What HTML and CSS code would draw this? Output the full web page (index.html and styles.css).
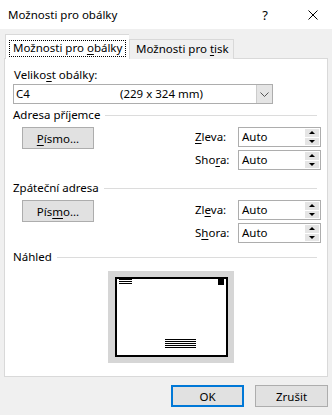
FILE: index.html
```html
<!DOCTYPE html>
<html lang="cs">
<head>
    <meta charset="UTF-8">
    <meta name="viewport" content="width=device-width, initial-scale=1.0">
    <title>Možnosti pro obálky</title>
    <link rel="stylesheet" href="styles.css">
</head>
<body>
    <div class="dialog">
        <div class="titlebar">
            <span class="title">Možnosti pro obálky</span>
            <div class="title-buttons">
                <span class="help">?</span>
                <svg class="close" width="10" height="10" viewBox="0 0 10 10">
                    <path d="M0.5 0.5 L9.5 9.5 M9.5 0.5 L0.5 9.5" stroke="#000" stroke-width="1" fill="none"/>
                </svg>
            </div>
        </div>

        <div class="tabs">
            <div class="tab active"><span class="focus">Možnosti pro <u>o</u>bálky</span></div>
            <div class="tab">Možnosti pro <u>t</u>isk</div>
        </div>

        <div class="panel">
            <div class="field-label">Veliko<u>s</u>t obálky:</div>
            <div class="combo">
                <span class="combo-name">C4</span>
                <span class="combo-size">(229 x 324 mm)</span>
                <span class="combo-arrow">
                    <svg width="9" height="5" viewBox="0 0 9 5">
                        <path d="M0.5 0.5 L4.5 4.5 L8.5 0.5" stroke="#555" stroke-width="1" fill="none"/>
                    </svg>
                </span>
            </div>

            <div class="group-title">Adresa příjemce</div>
            <div class="group-row">
                <button class="btn"><u>P</u>ísmo...</button>
                <div class="offsets">
                    <span class="offset-label"><u>Z</u>leva:</span>
                    <div class="spin"><span>Auto</span><span class="spin-btns"><i class="up"></i><i class="down"></i></span></div>
                    <span class="offset-label">Sho<u>r</u>a:</span>
                    <div class="spin"><span>Auto</span><span class="spin-btns"><i class="up"></i><i class="down"></i></span></div>
                </div>
            </div>

            <div class="group-title second">Zpáteční adresa</div>
            <div class="group-row">
                <button class="btn">Pís<u>m</u>o...</button>
                <div class="offsets">
                    <span class="offset-label">Zl<u>e</u>va:</span>
                    <div class="spin"><span>Auto</span><span class="spin-btns"><i class="up"></i><i class="down"></i></span></div>
                    <span class="offset-label">S<u>h</u>ora:</span>
                    <div class="spin"><span>Auto</span><span class="spin-btns"><i class="up"></i><i class="down"></i></span></div>
                </div>
            </div>

            <div class="group-title third">Náhled</div>
            <svg class="preview" width="126" height="92" viewBox="0 0 126 92">
                <rect x="0" y="0" width="126" height="92" fill="#d6d6d6"/>
                <rect x="8" y="7" width="111" height="78" fill="#fff" stroke="#000" stroke-width="2"/>
                <g stroke="#000" stroke-width="1">
                    <line x1="11" y1="8.5" x2="24" y2="8.5"/>
                    <line x1="11" y1="10.5" x2="24" y2="10.5"/>
                    <line x1="11" y1="12.5" x2="24" y2="12.5"/>
                    <line x1="57" y1="68.5" x2="88" y2="68.5"/>
                    <line x1="57" y1="70.5" x2="88" y2="70.5"/>
                    <line x1="57" y1="72.5" x2="88" y2="72.5"/>
                    <line x1="57" y1="74.5" x2="88" y2="74.5"/>
                    <line x1="57" y1="76.5" x2="88" y2="76.5"/>
                </g>
                <rect x="110" y="8" width="6" height="6" fill="#000"/>
            </svg>
        </div>

        <div class="footer">
            <button class="btn btn-default">OK</button>
            <button class="btn btn-cancel">Zrušit</button>
        </div>
    </div>
</body>
</html>
```

FILE: styles.css
```css
:root {
    --dialog-bg: #f0f0f0;
    --panel-border: #d9d9d9;
    --control-border: #adadad;
    --button-bg: #e1e1e1;
    --accent: #0078d7;
    --text: #000000;
}

* {
    margin: 0;
    padding: 0;
    box-sizing: border-box;
}

body {
    width: 332px;
    height: 415px;
    font-family: "Noto Sans", "Open Sans", sans-serif;
    font-size: 11.5px;
    line-height: 16px;
    color: var(--text);
    background-color: var(--dialog-bg);
    overflow: hidden;
}

u {
    text-decoration-thickness: 1px;
    text-underline-offset: 2px;
}

.dialog {
    display: flex;
    flex-direction: column;
    height: 100%;
}

/* title bar */
.titlebar {
    height: 29px;
    background-color: #ffffff;
    display: flex;
    align-items: center;
    justify-content: space-between;
    padding-left: 8px;
}

.title-buttons {
    display: flex;
    align-items: center;
}

.help {
    font-size: 13px;
    margin-right: 40px;
}

.close {
    display: block;
    margin-right: 14px;
}

/* tabs */
.tabs {
    display: flex;
    align-items: flex-end;
    height: 25px;
    margin-top: 5px;
    padding-left: 5px;
    position: relative;
    z-index: 1;
    margin-bottom: -1px;
}

.tab {
    height: 20px;
    padding: 0 4px 0 6px;
    border: 1px solid var(--panel-border);
    border-bottom: none;
    background-color: var(--dialog-bg);
    line-height: 18px;
    white-space: nowrap;
}

.tab.active {
    height: 25px;
    width: 124px;
    padding: 5px 3px 0 3px;
    background-color: #ffffff;
    border-right: none;
}

.tab.active + .tab {
    border-left: 1px solid var(--panel-border);
}

.focus {
    display: block;
    border: 1px dotted #000;
    height: 17px;
    padding-left: 3px;
    line-height: 14px;
}

/* panel */
.panel {
    margin: 0 4px;
    height: 319px;
    background-color: #ffffff;
    border: 1px solid var(--panel-border);
    padding: 8px 6px 0 8px;
}

.field-label {
    padding-left: 1px;
}

.combo {
    display: flex;
    align-items: center;
    width: 260px;
    height: 20px;
    margin-top: 1px;
    border: 1px solid var(--control-border);
    padding-left: 2px;
}

.combo-name {
    width: 104px;
}

.combo-size {
    flex: 1;
}

.combo-arrow {
    width: 16px;
    height: 18px;
    background-color: #e5e5e5;
    border-left: 1px solid #cccccc;
    display: flex;
    align-items: center;
    justify-content: center;
}

.combo-arrow svg {
    display: block;
}

.group-title {
    display: flex;
    align-items: center;
    margin-top: 3px;
}

.group-title::after {
    content: "";
    flex: 1;
    height: 1px;
    margin-left: 5px;
    margin-right: 4px;
    background-color: #dcdcdc;
}

.group-title.second {
    margin-top: 10px;
}

.group-title.third {
    margin-top: 6px;
}

.group-row {
    display: flex;
    justify-content: space-between;
    align-items: flex-start;
    margin-top: 4px;
}

.btn {
    font-family: inherit;
    font-size: 11.5px;
    color: var(--text);
    background-color: var(--button-bg);
    border: 1px solid var(--control-border);
    height: 22px;
    width: 72px;
    margin-left: 9px;
}

.offsets {
    display: grid;
    grid-template-columns: 43px 83px;
    row-gap: 3px;
    align-items: center;
}

.spin {
    height: 20px;
    border: 1px solid var(--control-border);
    display: flex;
    align-items: center;
    justify-content: space-between;
    padding-left: 3px;
}

.spin-btns {
    display: flex;
    flex-direction: column;
    gap: 1px;
    width: 14px;
    height: 16px;
    margin-right: 1px;
}

.spin-btns i {
    flex: 1;
    background-color: #e5e5e5;
    display: flex;
    align-items: center;
    justify-content: center;
}

.spin-btns i::before {
    content: "";
    border-left: 3px solid transparent;
    border-right: 3px solid transparent;
}

.spin-btns .up::before {
    border-bottom: 3px solid #000;
}

.spin-btns .down::before {
    border-top: 3px solid #000;
}

.preview {
    display: block;
    margin-top: 6px;
    margin-left: 95px;
}

/* footer */
.footer {
    display: flex;
    justify-content: flex-end;
    gap: 11px;
    padding: 8px 4px 0 0;
}

.footer .btn {
    margin-left: 0;
    height: 22px;
    width: 73px;
}

.btn-default {
    border: 2px solid var(--accent);
    width: 72px;
}
```
